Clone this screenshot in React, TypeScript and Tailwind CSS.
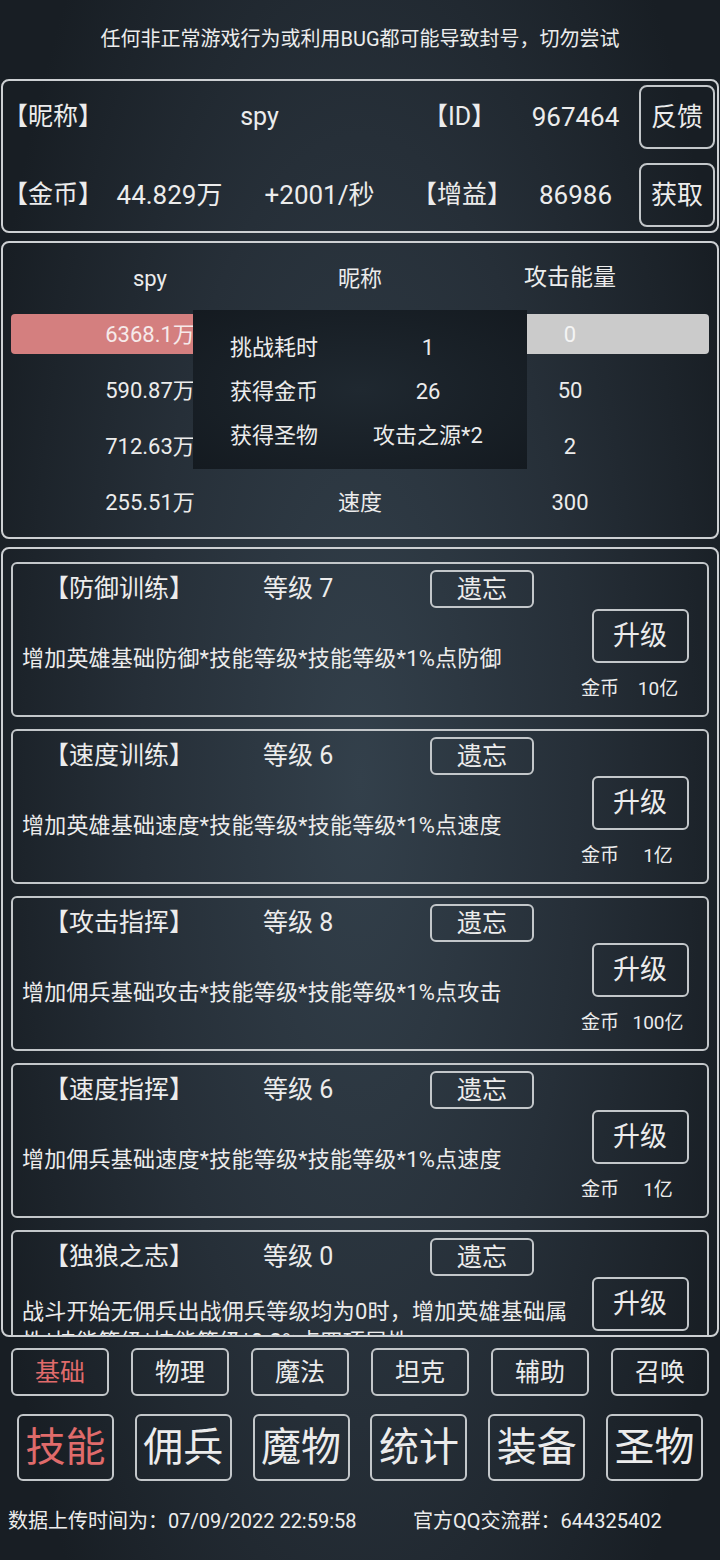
import React from 'react'

const font = { fontFamily: "Roboto, 'Noto Sans CJK SC', sans-serif" }

const skills = [
  { name: '【防御训练】', level: 7, desc: '增加英雄基础防御*技能等级*技能等级*1%点防御', cost: '10亿' },
  { name: '【速度训练】', level: 6, desc: '增加英雄基础速度*技能等级*技能等级*1%点速度', cost: '1亿' },
  { name: '【攻击指挥】', level: 8, desc: '增加佣兵基础攻击*技能等级*技能等级*1%点攻击', cost: '100亿' },
  { name: '【速度指挥】', level: 6, desc: '增加佣兵基础速度*技能等级*技能等级*1%点速度', cost: '1亿' },
  {
    name: '【独狼之志】',
    level: 0,
    desc: '战斗开始无佣兵出战佣兵等级均为0时，增加英雄基础属性*技能等级*技能等级*0.3%点四项属性',
    cost: '1亿',
  },
]

const subTabs = ['基础', '物理', '魔法', '坦克', '辅助', '召唤']
const mainTabs = ['技能', '佣兵', '魔物', '统计', '装备', '圣物']

function SkillCard({ s }: { s: (typeof skills)[number] }) {
  return (
    <div className="flex h-[155px] shrink-0 rounded-[6px] border-2 border-[#c3c7ca]">
      {/* 左侧：名称 + 描述 */}
      <div className="flex min-w-0 flex-1 flex-col pt-[6px] pb-[5px]">
        <div className="flex h-[38px] items-center">
          <span className="w-[250px] pl-[31px] text-[25px]">{s.name}</span>
          <span className="w-[167px] text-[25px]">等级 {s.level}</span>
          <button className="h-[38px] w-[104px] rounded-[6px] border-2 border-[#c3c7ca] text-[25px] leading-none">
            遗忘
          </button>
        </div>
        <div className="flex flex-1 items-center pl-[9px]">
          <p className="w-[548px] text-[22px] leading-[30px] tracking-[0.2px]">{s.desc}</p>
        </div>
      </div>
      {/* 右侧：升级 */}
      <div className="mr-[7px] flex w-[120px] flex-col items-center pt-[45px]">
        <button className="h-[54px] w-[97px] rounded-[6px] border-2 border-[#c3c7ca] text-[27px] leading-none">
          升级
        </button>
        <div className="mt-[12px] mr-[12px] flex items-center text-[19px]">
          <span className="w-[48px]">金币</span>
          <span className="w-[58px] text-center">{s.cost}</span>
        </div>
      </div>
    </div>
  )
}

export default function App() {
  return (
    <div
      style={font}
      className="relative h-[1560px] w-[720px] overflow-hidden bg-[radial-gradient(ellipse_55%_75%_at_50%_50%,#33404b_0%,#262f38_55%,#181e24_100%)] text-[#ececec]"
    >
      {/* 顶部提示 */}
      <div className="flex h-[79px] items-center justify-center pb-[2px] text-[20px]">
        任何非正常游戏行为或利用BUG都可能导致封号，切勿尝试
      </div>

      {/* 玩家信息 */}
      <div className="mx-[1px] flex flex-col gap-[14px] rounded-[8px] border-2 border-[#cdd0d3] py-[4px] text-[25px]">
        <div className="flex h-[64px] items-center">
          <span className="w-[109px]">【昵称】</span>
          <span className="w-[295px] text-center">spy</span>
          <span className="w-[105px] text-center">【ID】</span>
          <span className="w-[127px] text-center text-[26px]">967464</span>
          <button className="h-[64px] w-[76px] rounded-[8px] border-2 border-[#c3c7ca] text-[26px]">反馈</button>
        </div>
        <div className="flex h-[64px] items-center">
          <span className="w-[109px]">【金币】</span>
          <span className="w-[115px] text-center text-[26px]">44.829万</span>
          <span className="w-[185px] text-center text-[26px]">+2001/秒</span>
          <span className="w-[100px] text-center">【增益】</span>
          <span className="w-[127px] text-center text-[26px]">86986</span>
          <button className="h-[64px] w-[76px] rounded-[8px] border-2 border-[#c3c7ca] text-[26px]">获取</button>
        </div>
      </div>

      {/* 战斗信息 */}
      <div className="relative mx-[1px] mt-[8px] h-[298px] rounded-[8px] border-2 border-[#cdd0d3] px-[8px] pt-[7px] text-[22px]">
        <div className="grid grid-cols-[278px_142px_278px] auto-rows-[56px] items-center text-center">
          <span>spy</span>
          <span>昵称</span>
          <span className="text-[23px]">攻击能量</span>

          <div className="flex h-[40px] items-center justify-center rounded-[4px] bg-[#d47f7f] text-[#f6eaea]">6368.1万</div>
          <span />
          <div className="flex h-[40px] items-center justify-center rounded-[4px] bg-[#cbcbcb] text-[#f4f4f4]">0</div>

          <span>590.87万</span>
          <span />
          <span>50</span>

          <span>712.63万</span>
          <span />
          <span>2</span>

          <span>255.51万</span>
          <span>速度</span>
          <span>300</span>
        </div>

        {/* 结算弹窗 */}
        <div className="absolute left-[190px] top-[67px] flex h-[159px] w-[334px] flex-col pt-[15px] bg-[radial-gradient(ellipse_at_center,#1f2830_0%,#141a20_100%)]">
          {[
            ['挑战耗时', '1'],
            ['获得金币', '26'],
            ['获得圣物', '攻击之源*2'],
          ].map(([k, v]) => (
            <div key={k} className="flex h-[44px] items-center">
              <span className="w-[160px] pl-[37px]">{k}</span>
              <span className="w-[150px] text-center">{v}</span>
            </div>
          ))}
        </div>
      </div>

      {/* 技能列表 */}
      <div className="mx-[1px] mt-[8px] h-[790px] overflow-hidden rounded-[8px] border-2 border-[#cdd0d3] px-[8px] pt-[13px]">
        <div className="flex flex-col gap-[12px]">
          {skills.map((s) => (
            <SkillCard key={s.name} s={s} />
          ))}
        </div>
      </div>

      {/* 分类 */}
      <div className="mt-[11px] flex gap-[22px] px-[11px]">
        {subTabs.map((t, i) => (
          <button
            key={t}
            className={`h-[48px] w-[98px] rounded-[6px] border-2 border-[#c3c7ca] text-[25px] leading-none ${
              i === 0 ? 'text-[#e06b6b]' : 'text-[#ececec]'
            }`}
          >
            {t}
          </button>
        ))}
      </div>

      <div className="mt-[18px] flex justify-between px-[17px]">
        {mainTabs.map((t, i) => (
          <button
            key={t}
            className={`h-[67px] w-[97px] rounded-[6px] border-2 border-[#c3c7ca] text-[40px] leading-none ${
              i === 0 ? 'text-[#e06b6b]' : 'text-[#ececec]'
            }`}
          >
            {t}
          </button>
        ))}
      </div>

      {/* 底部 */}
      <div className="mt-[26px] flex h-[28px] items-center text-[20px]">
        <span className="w-[413px] pl-[8px]">数据上传时间为：07/09/2022 22:59:58</span>
        <span>官方QQ交流群：644325402</span>
      </div>
    </div>
  )
}
